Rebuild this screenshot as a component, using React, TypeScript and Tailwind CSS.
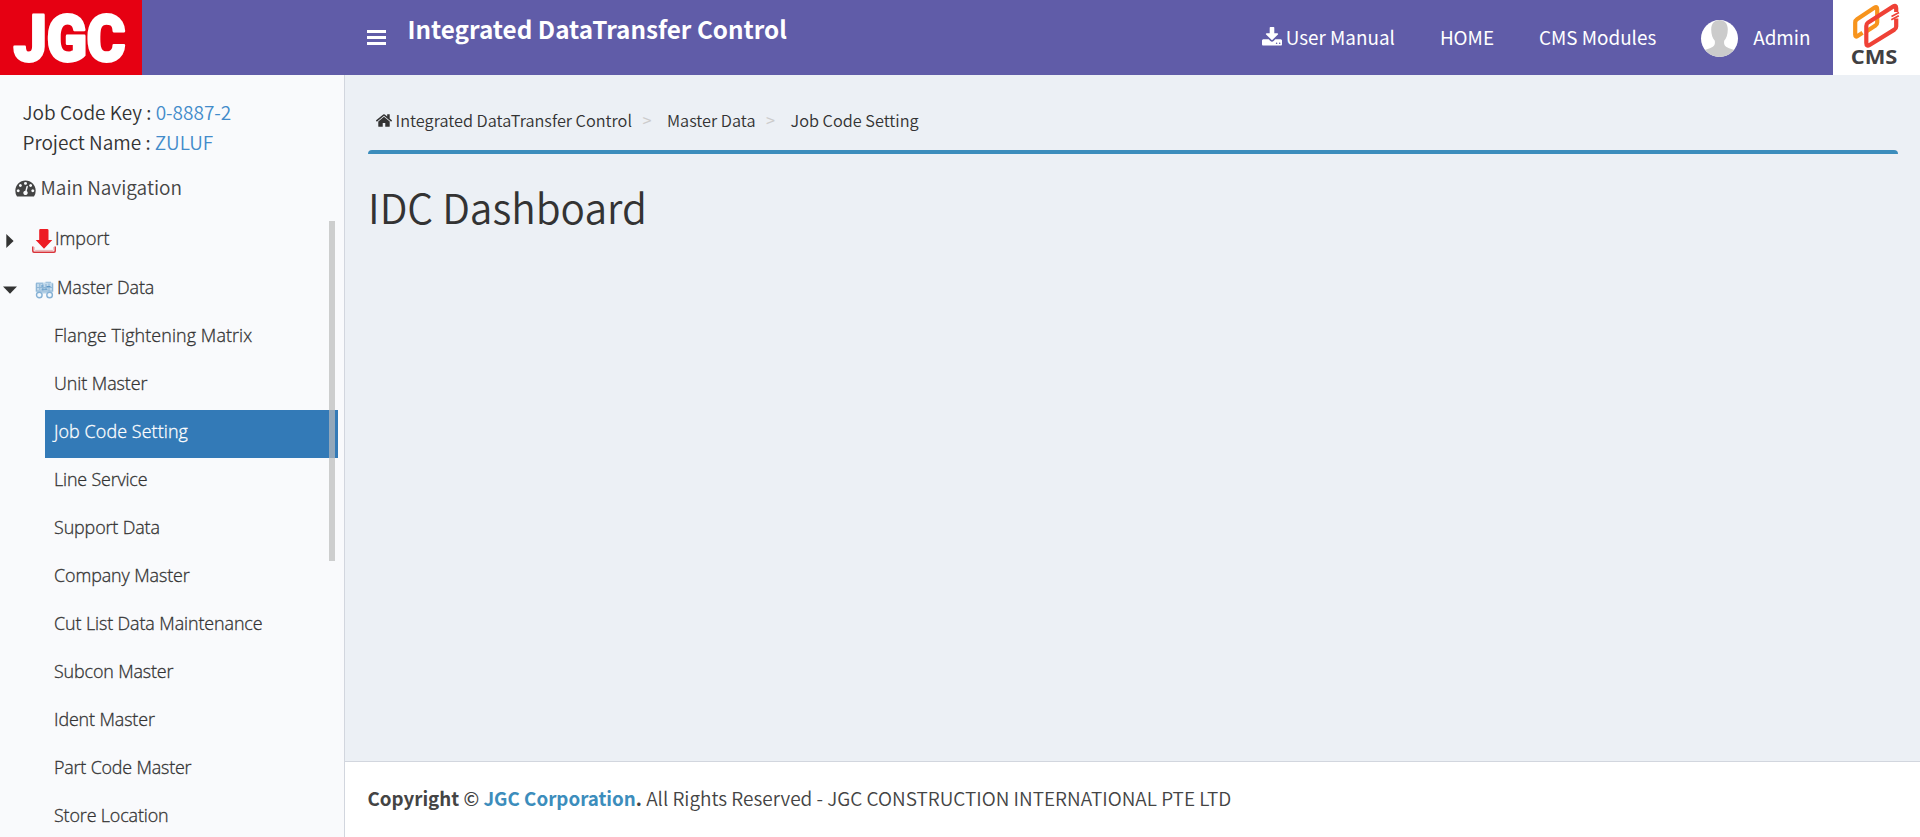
import type { ReactNode } from "react";

const sans = "font-['Noto_Sans_CJK_JP','Noto_Sans',sans-serif]";
const menuFont = "font-['Open_Sans','Noto_Sans',sans-serif]";

const menuItems: { label: string; tracking: string }[] = [
  { label: "Flange Tightening Matrix", tracking: "tracking-[0.1px]" },
  { label: "Unit Master", tracking: "tracking-[-0.07px]" },
  { label: "Job Code Setting", tracking: "tracking-[0.1px]" },
  { label: "Line Service", tracking: "tracking-[-0.17px]" },
  { label: "Support Data", tracking: "tracking-[-0.12px]" },
  { label: "Company Master", tracking: "tracking-[-0.09px]" },
  { label: "Cut List Data Maintenance", tracking: "tracking-[-0.1px]" },
  { label: "Subcon Master", tracking: "tracking-[-0.14px]" },
  { label: "Ident Master", tracking: "tracking-[-0.12px]" },
  { label: "Part Code Master", tracking: "tracking-[-0.18px]" },
  { label: "Store Location", tracking: "tracking-[-0.14px]" },
];

function DownloadIcon({ className }: { className: string }) {
  return (
    <svg className={className} viewBox="0 0 1664 1536" fill="currentColor">
      <path d="M1280 1344q0-26-19-45t-45-19-45 19-19 45 19 45 45 19 45-19 19-45zm256 0q0-26-19-45t-45-19-45 19-19 45 19 45 45 19 45-19 19-45zm128-224v320q0 40-28 68t-68 28h-1472q-40 0-68-28t-28-68v-320q0-40 28-68t68-28h465l135 136q58 56 136 56t136-56l136-136h464q40 0 68 28t28 68zm-325-569q17 41-14 70l-448 448q-18 19-45 19t-45-19l-448-448q-31-29-14-70 17-39 59-39h256v-448q0-26 19-45t45-19h256q26 0 45 19t19 45v448h256q42 0 59 39z" />
    </svg>
  );
}

function DashboardIcon({ className }: { className: string }) {
  return (
    <svg className={className} viewBox="0 128 1792 1536" fill="currentColor">
      <path d="M384 1152q0-53-37.5-90.5t-90.5-37.5-90.5 37.5-37.5 90.5 37.5 90.5 90.5 37.5 90.5-37.5 37.5-90.5zm192-448q0-53-37.5-90.5t-90.5-37.5-90.5 37.5-37.5 90.5 37.5 90.5 90.5 37.5 90.5-37.5 37.5-90.5zm428 481l101-382q6-26-7.5-48.5t-38.5-29.5-48 6.5-30 39.5l-101 382q-60 5-107 43.5t-63 98.5q-20 77 20 146t117 89 146-20 89-117q16-60-6-117t-72-91zm660-33q0-53-37.5-90.5t-90.5-37.5-90.5 37.5-37.5 90.5 37.5 90.5 90.5 37.5 90.5-37.5 37.5-90.5zm-640-640q0-53-37.5-90.5t-90.5-37.5-90.5 37.5-37.5 90.5 37.5 90.5 90.5 37.5 90.5-37.5 37.5-90.5zm448 192q0-53-37.5-90.5t-90.5-37.5-90.5 37.5-37.5 90.5 37.5 90.5 90.5 37.5 90.5-37.5 37.5-90.5zm320 448q0 261-141 483-19 29-54 29h-1402q-35 0-54-29-141-221-141-483 0-182 71-348t191-286 286-191 348-71 348 71 286 191 191 286 71 348z" />
    </svg>
  );
}

function HomeIcon({ className }: { className: string }) {
  return (
    <svg className={className} viewBox="89 253 1614 1283" fill="currentColor">
      <path d="M1472 992v480q0 26-19 45t-45 19h-384v-384h-256v384h-384q-26 0-45-19t-19-45v-480q0-1 .5-3t.5-3l575-474 575 474q1 2 1 6zm223-69l-62 74q-8 9-21 11h-3q-13 0-21-7l-692-577-692 577q-12 8-24 7-13-2-21-11l-62-74q-8-10-7-23.5t11-21.5l719-599q32-26 76-26t76 26l244 204v-195q0-14 9-23t23-9h192q14 0 23 9t9 23v408l219 182q10 8 11 21.5t-7 23.5z" />
    </svg>
  );
}

function JgcLogo() {
  return (
    <svg className="h-[75px] w-[142px] shrink-0 bg-[#e60012]" viewBox="0 0 142 75">
      <text
        x="13.5"
        y="60.5"
        fill="#fff"
        stroke="#fff"
        strokeWidth="2.8"
        strokeLinejoin="round"
        fontFamily="Roboto, sans-serif"
        fontWeight="900"
        fontSize="64.5"
        textLength="112"
        lengthAdjust="spacingAndGlyphs"
      >
        JGC
      </text>
    </svg>
  );
}

function CmsLogo() {
  return (
    <svg className="h-[75px] w-[87px] shrink-0 bg-white" viewBox="1833 0 87 75">
      <g fill="none" strokeWidth="4.2" strokeLinejoin="round">
        <path
          stroke="#f7941d"
          d="M1862.6 32.8 1857.6 36Q1855.2 37.5 1855.2 34.8L1855.2 22.4Q1855.2 20.4 1857 19.2L1874.3 7.8Q1877.2 6 1877.2 9.2L1877.2 22.6Q1877.2 24.5 1875.5 25.6L1867 31"
        />
        <path
          stroke="#ef4136"
          d="M1896.2 12 1896.2 8Q1896.2 4.6 1893 6.6L1868.2 22.4Q1866.3 23.8 1866.3 26L1866.3 43Q1866.3 47 1869.6 45L1894.4 29.6Q1896.2 28.4 1896.2 26.4L1896.2 18.5"
        />
        <path stroke="#ef4136" strokeWidth="1.7" d="M1891.5 16.5 1899 12.6M1891.3 19.8 1898.8 15.8" />
      </g>
      <text
        x="1850.8"
        y="64.2"
        fill="#414042"
        fontFamily="'Open Sans', sans-serif"
        fontWeight="700"
        fontSize="19.2"
        textLength="46.6"
        lengthAdjust="spacingAndGlyphs"
      >
        CMS
      </text>
    </svg>
  );
}

function Avatar() {
  return (
    <svg className="size-[37px] rounded-full bg-white" viewBox="0 0 37 37">
      <path
        fill="#cbcbcb"
        d="M18.5 0C23.5 0 26.8 3.5 26.8 9.5C26.8 14.5 25.3 18.5 23.2 20.8C22.6 25 24 26.6 28 28.2C31 29.2 34 30.2 37 31V37H0V31C3 30.2 6 29.2 9 28.2C13 26.6 14.4 25 13.8 20.8C11.7 18.5 10.2 14.5 10.2 9.5C10.2 3.5 13.5 0 18.5 0Z"
      />
    </svg>
  );
}

function ImportIcon() {
  return (
    <svg className="mt-3 h-6 w-6 shrink-0" viewBox="0 0 24 24">
      <path fill="none" stroke="#d9333a" strokeWidth="1.5" d="M.8 17.5V22Q.8 23.2 2 23.2H22Q23.2 23.2 23.2 22V17.5" />
      <path fill="none" stroke="#e9b3b5" strokeWidth="1" d="M2.2 18V20.5Q2.4 21.4 3.4 21.4H20.6Q21.6 21.4 21.8 20.5V18" />
      <path fill="#ed1c24" d="M8.4 0H15.2Q16.5 0 16.5 1.2V11H20.3L12 19.8 3.7 11H7.2V1.2Q7.2 0 8.4 0Z" />
    </svg>
  );
}

function MasterIcon() {
  return (
    <svg className="mt-3.5 h-[19px] w-[19px] shrink-0" viewBox="0 0 19 19">
      <rect x=".5" y="2.5" width="18" height="10" rx="1.5" fill="#c3daec" />
      <path fill="none" stroke="#8fb6d6" strokeWidth="1.1" d="M1.5 3.5V11.5M4.8 4V10M7.8 4V11M11 4V10M14 3.5V11.5M17.5 3.5V11.5M1 3.2H8M10.5 2.2H16M2 7.5H17M2 11H17" />
      <path fill="none" stroke="#5f97c6" strokeWidth="1" d="M6 6H8.5M11.5 6.5H15.5M6.5 9.2H12.5" />
      <g fill="#f4f9fd" stroke="#86b1d5" strokeWidth="1.4">
        <circle cx="4.3" cy="15" r="2.8" />
        <circle cx="14.6" cy="15" r="2.8" />
      </g>
      <path stroke="#a8c8e2" strokeWidth="1.2" d="M7 12.8H12" />
    </svg>
  );
}

function TreeRow({ caret, icon, children }: { caret: ReactNode; icon: ReactNode; children: ReactNode }) {
  return (
    <div className="flex h-12 items-start">
      <div className="w-8 shrink-0">{caret}</div>
      {icon}
      {children}
    </div>
  );
}

function Header() {
  return (
    <header className="flex h-[75px] shrink-0 bg-[#605ca8] text-white">
      <JgcLogo />
      <div className="flex flex-1 items-start pl-[225px]">
        <div className="mt-[30px] flex w-[19px] flex-col gap-[3px]">
          <span className="h-[3px] bg-white" />
          <span className="h-[3px] bg-white" />
          <span className="h-[3px] bg-white" />
        </div>
        <h1 className="mt-[17px] ml-[21.5px] text-[24.27px] leading-6 font-bold whitespace-nowrap">
          Integrated DataTransfer Control
        </h1>
      </div>
      <nav className="flex h-[75px] items-center gap-[45px] pr-[22.5px] text-[18.85px] whitespace-nowrap">
        <a className="flex items-center gap-[3.5px]">
          <DownloadIcon className="mb-0.5 h-[18.5px] w-5" />
          User Manual
        </a>
        <a>HOME</a>
        <a>CMS Modules</a>
        <a className="flex items-center gap-[15px]">
          <span className="pt-0.5">
            <Avatar />
          </span>
          Admin
        </a>
      </nav>
      <CmsLogo />
    </header>
  );
}

function Sidebar() {
  return (
    <aside className="relative w-[345px] shrink-0 overflow-hidden border-r border-[#d2d6de] bg-[#f9fafc]">
      <div className="pt-[22px] pl-[22.5px] text-[19px] leading-[30px] font-[350] text-[#333]">
        <p>
          Job Code Key : <span className="text-[#428bca]">0-8887-2</span>
        </p>
        <p>
          Project Name : <span className="text-[#428bca]">ZULUF</span>
        </p>
      </div>
      <div className="mt-[15px] flex h-[30px] items-center gap-[4.5px] pl-[15px] text-[19px] font-[350] text-[#444]">
        <DashboardIcon className="mt-0.5 h-[17.5px] w-[21px]" />
        Main Navigation
      </div>
      <div
        className={`${menuFont} mt-[15px] text-[17.9px] leading-[43px] font-light whitespace-nowrap text-[#333] [-webkit-text-stroke:0.3px]`}
      >
        <TreeRow
          caret={
            <svg className="mt-[17px] ml-1.5 h-[14px] w-2" viewBox="0 0 8 14">
              <path d="M.3 0 7.6 7 .3 14Z" fill="#333" />
            </svg>
          }
          icon={<ImportIcon />}
        >
          <span className="-ml-px tracking-[0.03px]">Import</span>
        </TreeRow>
        <div className="h-px" />
        <TreeRow
          caret={
            <svg className="mt-5 ml-[3px] h-2 w-[14px]" viewBox="0 0 14 8">
              <path d="M0 .5 14 .5 7 7.8Z" fill="#333" />
            </svg>
          }
          icon={<span className="pl-[3px]"><MasterIcon /></span>}
        >
          <span className="pl-[3px] tracking-[-0.1px]">Master Data</span>
        </TreeRow>
        <ul className="pr-1.5 pl-[45px]">
          {menuItems.map((item) => (
            <li
              key={item.label}
              className={`h-12 pl-[9px] ${item.tracking} ${
                item.label === "Job Code Setting" ? "bg-[#337ab7] text-white" : ""
              }`}
            >
              {item.label}
            </li>
          ))}
        </ul>
      </div>
      <div className="absolute top-[146px] left-[329px] h-[340px] w-1.5 bg-[#bbbbbb]/70" />
    </aside>
  );
}

function Main() {
  return (
    <div className="flex flex-1 flex-col text-[#333]">
      <main className="flex-1 pr-[22px] pl-[23px]">
        <div className="flex h-[75px] items-start pt-[30px] pl-[7.5px] text-[16.3px] leading-[30px] font-[350]">
          <HomeIcon className="mt-[9px] mr-1 h-[13px] w-[16px]" />
          <span>Integrated DataTransfer Control</span>
          <span className="w-[35px] pl-[10.5px] font-normal text-[#ccc]">&gt;</span>
          <span>Master Data</span>
          <span className="w-[35px] pl-[10.5px] font-normal text-[#ccc]">&gt;</span>
          <span>Job Code Setting</span>
        </div>
        <div className="h-1 rounded-t-[4px] bg-[#3c8dbc]" />
        <h2 className="mt-[23px] text-[40.6px] leading-[60px] font-[350]">IDC Dashboard</h2>
      </main>
      <footer className="h-[76px] border-t border-[#d2d6de] bg-white pt-[20px] pl-[22.5px] text-[19px] leading-[32px] font-[350] whitespace-nowrap text-[#444]">
        <strong className="text-[18.75px] font-bold">
          Copyright <span className="font-medium">©</span> <span className="text-[#3c8dbc]">JGC Corporation</span>.
        </strong>{" "}
        All Rights Reserved - JGC CONSTRUCTION INTERNATIONAL PTE LTD
      </footer>
    </div>
  );
}

export default function App() {
  return (
    <div className={`${sans} flex h-[837px] flex-col overflow-hidden bg-[#ecf0f5]`}>
      <Header />
      <div className="flex min-h-0 flex-1">
        <Sidebar />
        <Main />
      </div>
    </div>
  );
}
